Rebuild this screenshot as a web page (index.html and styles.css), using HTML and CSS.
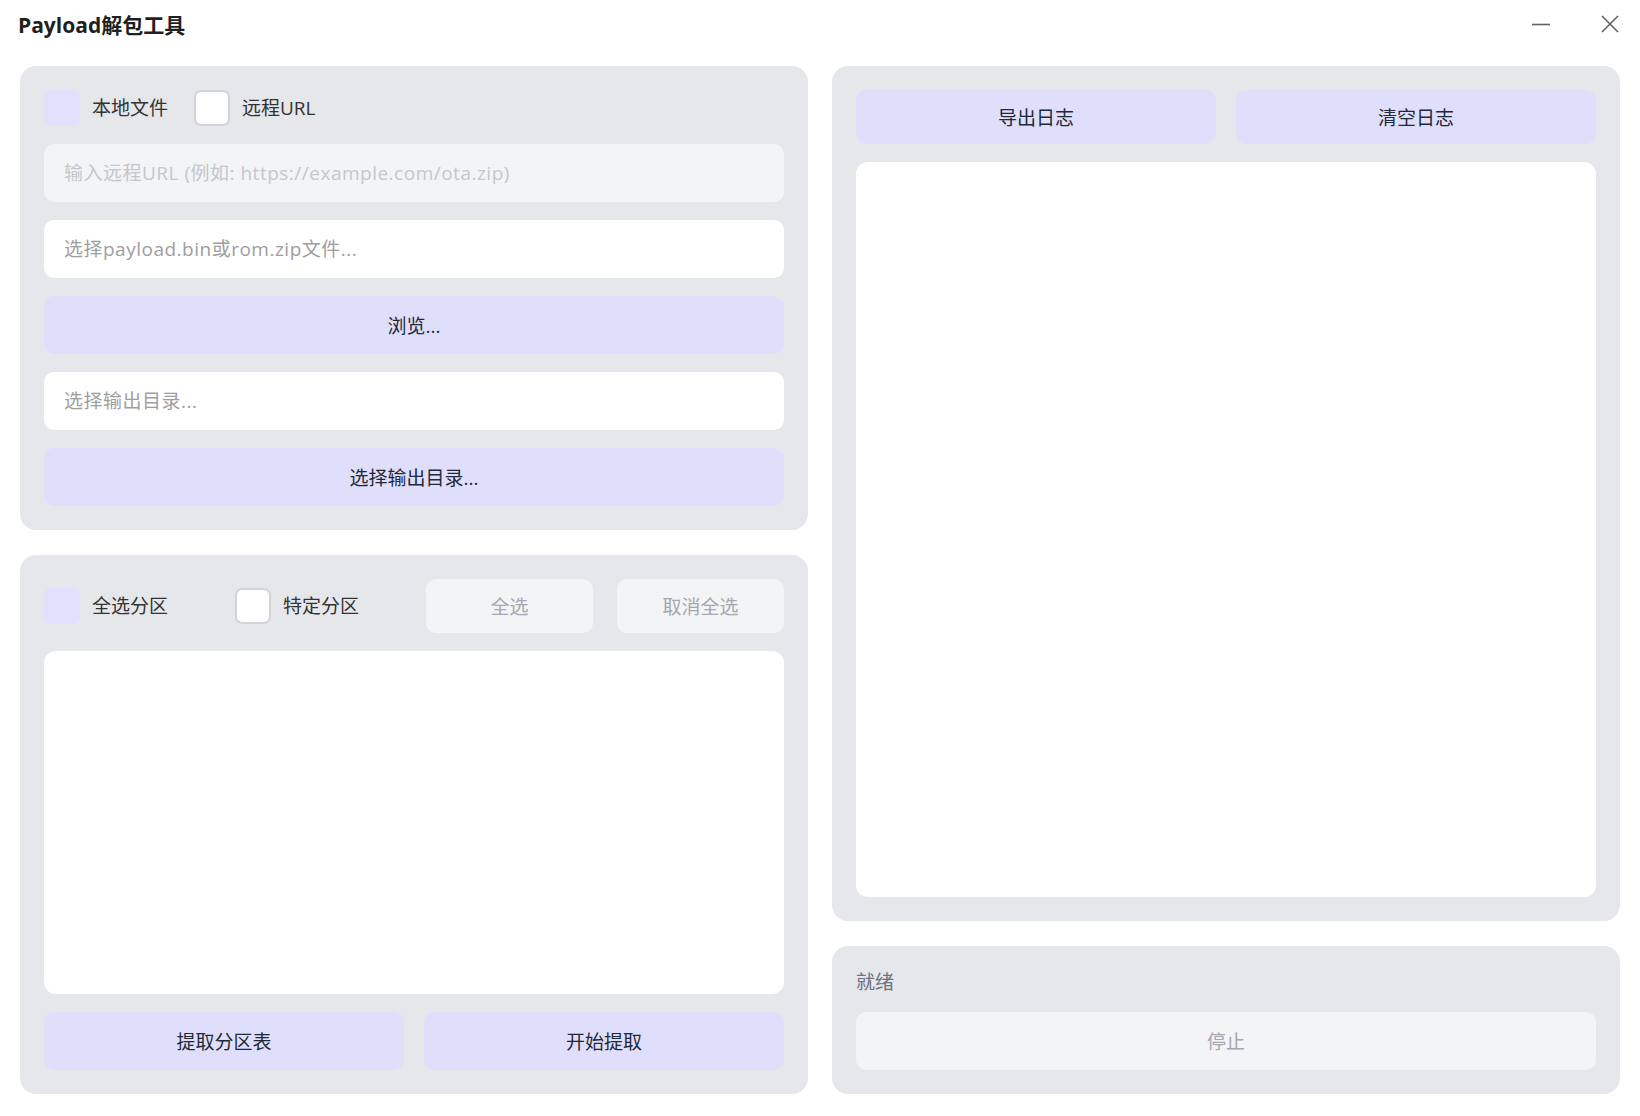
FILE: index.html
```html
<!DOCTYPE html>
<html lang="zh-CN">
<head>
    <meta charset="UTF-8">
    <title>Payload解包工具</title>
    <link rel="stylesheet" href="styles.css">
</head>
<body>
    <header class="titlebar">
        <h1>Payload解包工具</h1>
        <div class="window-controls">
            <svg width="18" height="18" viewBox="0 0 18 18"><line x1="0" y1="9.5" x2="18" y2="9.5" stroke="#5f6368" stroke-width="1.6"/></svg>
            <svg width="18" height="18" viewBox="0 0 18 18"><path d="M1 1 L17 17 M17 1 L1 17" stroke="#5f6368" stroke-width="1.6" fill="none"/></svg>
        </div>
    </header>

    <div class="main">
        <!-- Left column -->
        <div class="column">
            <div class="panel">
                <div class="check-row">
                    <label class="check-item"><span class="box checked"></span>本地文件</label>
                    <label class="check-item"><span class="box"></span>远程URL</label>
                </div>
                <input class="field" type="text" placeholder="输入远程URL (例如: https://example.com/ota.zip)" disabled>
                <input class="field" type="text" placeholder="选择payload.bin或rom.zip文件...">
                <button class="btn">浏览...</button>
                <input class="field" type="text" placeholder="选择输出目录...">
                <button class="btn">选择输出目录...</button>
            </div>

            <div class="panel grow">
                <div class="partition-row">
                    <label class="check-item"><span class="box checked"></span>全选分区</label>
                    <label class="check-item"><span class="box"></span>特定分区</label>
                    <button class="btn small" disabled>全选</button>
                    <button class="btn small" disabled>取消全选</button>
                </div>
                <div class="list-box"></div>
                <div class="btn-pair">
                    <button class="btn">提取分区表</button>
                    <button class="btn">开始提取</button>
                </div>
            </div>
        </div>

        <!-- Right column -->
        <div class="column">
            <div class="panel grow">
                <div class="btn-pair">
                    <button class="btn small">导出日志</button>
                    <button class="btn small">清空日志</button>
                </div>
                <div class="log-box"></div>
            </div>

            <div class="panel">
                <div class="status">就绪</div>
                <button class="btn" disabled>停止</button>
            </div>
        </div>
    </div>
</body>
</html>
```

FILE: styles.css
```css
* {
    margin: 0;
    padding: 0;
    box-sizing: border-box;
}

body {
    background-color: #ffffff;
    font-family: "Open Sans", "Noto Sans CJK SC", sans-serif;
    color: #1f2937;
    height: 1116px;
    overflow: hidden;
}

.titlebar {
    height: 48px;
    display: flex;
    align-items: center;
    padding: 0 21px 0 18px;
}

.titlebar h1 {
    font-size: 21px;
    font-weight: 700;
    color: #1f1f1f;
}

.window-controls {
    margin-left: auto;
    display: flex;
    gap: 51px;
}

.main {
    height: 1068px;
    padding: 18px 20px 22px;
    display: grid;
    grid-template-columns: 1fr 1fr;
    gap: 24px;
}

.column {
    display: flex;
    flex-direction: column;
    gap: 25px;
    min-height: 0;
}

.panel {
    background-color: #e5e7eb;
    border-radius: 16px;
    padding: 24px;
    display: flex;
    flex-direction: column;
    gap: 18px;
}

.panel.grow {
    flex: 1;
    min-height: 0;
}

.check-row {
    display: flex;
    align-items: center;
    gap: 26px;
    height: 36px;
}

.check-item {
    display: flex;
    align-items: center;
    gap: 12px;
    font-size: 19px;
    line-height: 1;
    color: #333333;
}

.box {
    width: 36px;
    height: 36px;
    border-radius: 7px;
    background-color: #ffffff;
    border: 2px solid #d1d3d8;
}

.box.checked {
    background-color: #e2e0fd;
    border-color: #e2e0fd;
}

.field {
    height: 58px;
    border: none;
    border-radius: 10px;
    background-color: #ffffff;
    padding: 0 20px;
    font-family: inherit;
    font-size: 19px;
    letter-spacing: 0.5px;
    color: #333333;
    outline: none;
}

.field::placeholder {
    color: #9e9e9e;
}

.field:disabled {
    background-color: #f3f4f6;
}

.field:disabled::placeholder {
    color: #c4c7cc;
}

.btn {
    height: 58px;
    border: none;
    border-radius: 10px;
    background-color: #e0dffb;
    font-family: inherit;
    font-size: 19px;
    color: #1f2937;
}

.btn:disabled {
    background-color: #f3f4f6;
    color: #a3a7ae;
}

.btn.small {
    height: 54px;
}

.partition-row {
    display: grid;
    grid-template-columns: repeat(4, 1fr);
    gap: 24px;
    align-items: center;
}

.btn-pair {
    display: grid;
    grid-template-columns: 1fr 1fr;
    gap: 20px;
}

.list-box,
.log-box {
    flex: 1;
    background-color: #ffffff;
    border-radius: 12px;
}

.status {
    font-size: 19px;
    color: #6b7280;
    height: 24px;
    line-height: 24px;
}
```
